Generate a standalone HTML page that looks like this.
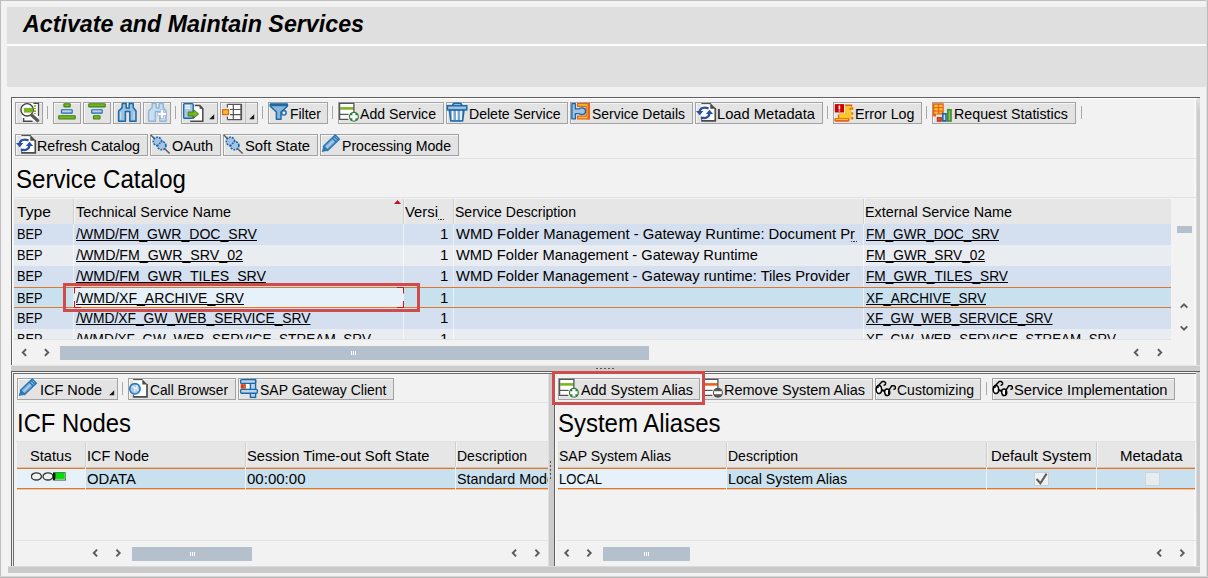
<!DOCTYPE html>
<html><head><meta charset="utf-8"><title>Activate and Maintain Services</title>
<style>
html,body{margin:0;padding:0}
body{width:1208px;height:578px;overflow:hidden;background:#f2f2f2;position:relative;font-family:"Liberation Sans",sans-serif;color:#000}
body div,body span.t,body svg{position:absolute}
span.t{white-space:nowrap;line-height:1;color:#000}
span.u{text-decoration:underline;text-decoration-thickness:1.1px;text-underline-offset:1.05px;text-decoration-skip-ink:none}
.btn{background:#e3e3e3;border:1px solid #a2a2a2;box-sizing:border-box;box-shadow:inset 1px 1px 0 #f6f6f6}
.sep{width:1px;background:#a8a8a8}

</style></head>
<body>
<div style="left:0px;top:0px;width:1208px;height:1px;background:#bfbfbf;"></div>
<div style="left:0px;top:0px;width:1px;height:578px;background:#bfbfbf;"></div>
<div style="left:1207px;top:0px;width:1px;height:578px;background:#bcbcbc;"></div>
<div style="left:1206px;top:0px;width:1px;height:578px;background:#dedede;"></div>
<div style="left:0px;top:577px;width:1208px;height:1px;background:#b6b6b6;"></div>
<div style="left:0px;top:576px;width:1208px;height:1px;background:#d6d6d6;"></div>
<div style="left:7px;top:7px;width:1199px;height:37px;background:#dfdfdf;"></div>
<div style="left:7px;top:44px;width:1199px;height:2px;background:#fdfdfd;"></div>
<div style="left:7px;top:46px;width:1199px;height:41px;background:#dfdfdf;"></div>
<span class="t " style="left:23.00px;top:12.53px;font-size:23px;font-weight:bold;font-style:italic;letter-spacing:0.000px;transform:scaleX(1.0105);transform-origin:0 0;">Activate and Maintain Services</span>
<div style="left:11px;top:97px;width:1189px;height:1px;background:#606060;"></div>
<div style="left:11px;top:97px;width:1px;height:269px;background:#606060;"></div>
<div style="left:12px;top:98px;width:1188px;height:1px;background:#ffffff;"></div>
<div style="left:12px;top:98px;width:1px;height:268px;background:#ffffff;"></div>
<div style="left:1197px;top:98px;width:3px;height:474px;background:linear-gradient(#e4e4e4,#cdcdcd 14px,#cacaca);"></div>
<div style="left:1196px;top:100px;width:1px;height:466px;background:#dadada;"></div>
<div style="left:1194px;top:98px;width:2px;height:468px;background:#f8f8f8;"></div>
<div style="left:11px;top:365px;width:1189px;height:1px;background:#e4e4e4;"></div>
<div style="left:11px;top:366px;width:1189px;height:5px;background:#cdcdcd;"></div>
<div class="btn" style="left:15px;top:102px;width:28px;height:22px"></div>
<div class="btn" style="left:53px;top:102px;width:28px;height:22px"></div>
<div class="btn" style="left:83px;top:102px;width:28px;height:22px"></div>
<div class="btn" style="left:113px;top:102px;width:28px;height:22px"></div>
<div class="btn" style="left:143px;top:102px;width:28px;height:22px"></div>
<div class="btn" style="left:181px;top:102px;width:37px;height:22px"></div>
<div class="btn" style="left:220px;top:102px;width:38px;height:22px"></div>
<div class="btn" style="left:268px;top:102px;width:60px;height:22px"></div>
<div class="btn" style="left:338px;top:102px;width:106px;height:22px"></div>
<div class="btn" style="left:446px;top:102px;width:122px;height:22px"></div>
<div class="btn" style="left:570px;top:102px;width:123px;height:22px"></div>
<div class="btn" style="left:695px;top:102px;width:128px;height:22px"></div>
<div class="btn" style="left:833px;top:102px;width:89px;height:22px"></div>
<div class="btn" style="left:932px;top:102px;width:144px;height:22px"></div>
<div class="sep" style="left:47px;top:106px;height:13px"></div>
<div class="sep" style="left:175px;top:106px;height:13px"></div>
<div class="sep" style="left:262px;top:106px;height:13px"></div>
<div class="sep" style="left:332px;top:106px;height:13px"></div>
<div class="sep" style="left:827px;top:106px;height:13px"></div>
<div class="sep" style="left:926px;top:106px;height:13px"></div>
<div class="sep" style="left:1081px;top:106px;height:13px"></div>
<div style="left:245px;top:103px;width:1px;height:20px;background:#c4c4c4;"></div>
<span class="t " style="left:289.88px;top:105.90px;font-size:15px;letter-spacing:0.000px;transform:scaleX(0.9297);transform-origin:0 0;">Filter</span>
<span class="t " style="left:360.38px;top:105.90px;font-size:15px;letter-spacing:0.000px;transform:scaleX(0.9397);transform-origin:0 0;">Add Service</span>
<span class="t " style="left:468.88px;top:105.90px;font-size:15px;letter-spacing:0.000px;transform:scaleX(0.9380);transform-origin:0 0;">Delete Service</span>
<span class="t " style="left:592.38px;top:105.90px;font-size:15px;letter-spacing:0.000px;transform:scaleX(0.9296);transform-origin:0 0;">Service Details</span>
<span class="t " style="left:717.38px;top:105.90px;font-size:15px;letter-spacing:0.000px;transform:scaleX(0.9792);transform-origin:0 0;">Load Metadata</span>
<span class="t " style="left:855.38px;top:105.90px;font-size:15px;letter-spacing:0.000px;transform:scaleX(0.9515);transform-origin:0 0;">Error Log</span>
<span class="t " style="left:954.38px;top:105.90px;font-size:15px;letter-spacing:0.000px;transform:scaleX(0.9495);transform-origin:0 0;">Request Statistics</span>
<svg style="left:15px;top:102px" width="28" height="22" viewBox="0 0 28 22"><rect x="7" y="1.2" width="16.5" height="18" fill="#fff"/>
<path d="M18.4 1.4H23.5V14" fill="none" stroke="#4a4a4a" stroke-width="1.3"/>
<path d="M8.6 16V19.3H17.6" fill="none" stroke="#4a4a4a" stroke-width="1.5"/>
<rect x="18.8" y="3.2" width="2.3" height="1.6" fill="#79b51c"/><rect x="18.8" y="6.1" width="2.3" height="1" fill="#79b51c"/>
<rect x="18.8" y="8.4" width="2.3" height="1.6" fill="#79b51c"/><rect x="18.8" y="11" width="2.3" height="1" fill="#79b51c"/>
<circle cx="12.1" cy="7.8" r="6.2" fill="#fff" stroke="#3e3e3e" stroke-width="1.4"/>
<rect x="8.9" y="5.9" width="8.8" height="4.7" fill="#79b51c"/>
<path d="M16.8 13.2L22.6 18.4" stroke="#5a5a5a" stroke-width="3.4" stroke-linecap="round"/></svg>
<svg style="left:53px;top:102px" width="28" height="22" viewBox="0 0 28 22"><rect x="10.9" y="1.7999999999999998" width="6.3" height="3.0999999999999996" rx="0.4" fill="#79b51c" stroke="#3f7f1f" stroke-width="1.1"/><rect x="8.5" y="7.699999999999999" width="10.700000000000001" height="3.3999999999999995" rx="0.4" fill="#b9d1ec" stroke="#1b6aa6" stroke-width="1.1"/><rect x="5.699999999999999" y="13.7" width="16.500000000000004" height="3.3000000000000016" rx="0.4" fill="#79b51c" stroke="#3f7f1f" stroke-width="1.1"/></svg>
<svg style="left:83px;top:102px" width="28" height="22" viewBox="0 0 28 22"><rect x="5.8" y="1.7999999999999998" width="16.400000000000002" height="3.0999999999999996" rx="0.4" fill="#79b51c" stroke="#3f7f1f" stroke-width="1.1"/><rect x="8.7" y="7.699999999999999" width="10.500000000000002" height="3.3999999999999995" rx="0.4" fill="#b9d1ec" stroke="#1b6aa6" stroke-width="1.1"/><rect x="10.5" y="13.7" width="6.500000000000001" height="3.3000000000000016" rx="0.4" fill="#79b51c" stroke="#3f7f1f" stroke-width="1.1"/></svg>
<svg style="left:113px;top:102px" width="28" height="22" viewBox="0 0 28 22"><path d="M9.2 1.5H13.2V5.9H16.2V1.5H20.2V5.6L23 9V19.2H16.8V9.4H12.4V19.2H5.6V9L9.2 5.6Z" fill="#9dbfe0" stroke="#1b6aa6" stroke-width="1.5" stroke-linejoin="round"/><path d="M7.6 10V17.6M21 10V17.6" stroke="#dbe8f5" stroke-width="1.2" opacity=".8"/></svg>
<svg style="left:143px;top:102px" width="28" height="22" viewBox="0 0 28 22"><path d="M9.2 1.5H13.2V5.9H16.2V1.5H20.2V5.6L23 9V19.2H16.8V9.4H12.4V19.2H5.6V9L9.2 5.6Z" fill="#c9ddee" stroke="#8db9db" stroke-width="1.5" stroke-linejoin="round"/><path d="M7.6 10V17.6M21 10V17.6" stroke="#dbe8f5" stroke-width="1.2" opacity=".8"/><path d="M19 7.4V16.6M14.4 12H23.6" stroke="#9aa6d6" stroke-width="3.8"/><path d="M19 7.9V16.1M14.9 12H23.1" stroke="#fff" stroke-width="2.4"/></svg>
<svg style="left:181px;top:102px" width="28" height="22" viewBox="0 0 28 22"><path d="M13.8 3.6H18.8L21.8 6.6V19.2H9" fill="#fff" stroke="none"/>
<path d="M13.8 3.6H18.8L21.8 6.6V19.2H9.2" fill="none" stroke="#4a4a4a" stroke-width="1.5"/><path d="M18.6 3.6V6.8H21.8Z" fill="#4a4a4a"/>
<rect x="2.6" y="1.6" width="9.6" height="14.6" rx="1" fill="#a9c6e6" stroke="#1b6aa6" stroke-width="1.4"/>
<path d="M4.2 3.8H9M4.2 6.2H9" stroke="#fff" stroke-width="1.2"/>
<path d="M7.2 10H12.4V7.4L17.6 12L12.4 16.4V14H7.2Z" fill="#79b51c" stroke="#3f7f1f" stroke-width="1"/></svg>
<svg style="left:209px;top:114px" width="6" height="6" viewBox="0 0 6 6"><path d="M5.2 0.2V5.2H0.2Z" fill="#1a1a1a"/></svg>
<svg style="left:220px;top:102px" width="28" height="22" viewBox="0 0 28 22"><rect x="7.4" y="2.4" width="14" height="15" fill="#fff"/>
<path d="M7.4 2.3H21.6M10 7.5H21.6M10 12.7H21.6M7.4 17.6H21.6M13.3 2.3V17.6M7.4 2.3V5.5M7.4 14.5V17.6" fill="none" stroke="#555" stroke-width="1.2"/>
<path d="M21.2 2V18" stroke="#555" stroke-width="1.8"/>
<rect x="2.7" y="7.7" width="5.8" height="4.8" fill="#f9c62b" stroke="#e8621a" stroke-width="1.3"/></svg>
<svg style="left:249px;top:114px" width="6" height="6" viewBox="0 0 6 6"><path d="M5.2 0.2V5.2H0.2Z" fill="#1a1a1a"/></svg>
<svg style="left:268px;top:102px" width="24" height="22" viewBox="0 0 24 22"><path d="M2.2 2.2H19.4V4.2L13 10V17.2H8.4V10L2.2 4.2Z" fill="#8fb4da" stroke="#1b6aa6" stroke-width="1.5" stroke-linejoin="round"/>
<rect x="2" y="1.4" width="17.6" height="2.8" fill="#1b6aa6"/>
<circle cx="15.9" cy="10.8" r="2.3" fill="#dbe7f3" stroke="#1b6aa6" stroke-width="1.4"/></svg>
<svg style="left:338px;top:102px" width="22" height="22" viewBox="0 0 22 22"><rect x="1.6" y="1.2" width="14.2" height="16.6" fill="#fff"/>
<rect x="2.2" y="5.1" width="13.6" height="2.6" fill="#79b51c"/>
<path d="M15.9 10V1.3H1.6V17.4H10.4" fill="none" stroke="#555" stroke-width="1.3"/>
<path d="M1.6 12.4H10.6" stroke="#555" stroke-width="1.2"/><circle cx="15.9" cy="14.7" r="5" fill="#2f7d3c"/><path d="M15.9 11V18.4M12.2 14.7H19.6" stroke="#fff" stroke-width="3"/></svg>
<svg style="left:446px;top:102px" width="22" height="22" viewBox="0 0 22 22"><path d="M6.6 3.4Q6.6 1.2 9 1.2H13.4Q15.8 1.2 15.8 3.4" fill="#9fc0e2" stroke="#1b6aa6" stroke-width="1.4"/>
<path d="M3.4 8L4.8 19H16.6L18 8Z" fill="#7aa6d2" stroke="#1b6aa6" stroke-width="1.6" stroke-linejoin="round"/>
<path d="M6.6 8.6V18M10.8 8.6V18M15 8.6V18" stroke="#fff" stroke-width="1.6"/>
<rect x="1.4" y="3.7" width="19.4" height="4.2" fill="#9fc0e2" stroke="#1b6aa6" stroke-width="1.5"/></svg>
<svg style="left:570px;top:102px" width="22" height="22" viewBox="0 0 22 22"><path d="M7.6 1.6H19.2V16.9H7.6V14.1H16.1V4.4H7.6Z" fill="#f9c62b" stroke="#e8621a" stroke-width="1.2"/>
<path d="M18.7 1V17.5" stroke="#e8621a" stroke-width="2.4"/>
<path d="M1.9 1.6H5.4V6.9H9.4C10.4 5.4 15.6 5.2 15.6 9.2C15.6 13.2 10.4 13 9.4 11.6H5.4V16.9H1.9Z" fill="#a3c1e2" stroke="#1b6aa6" stroke-width="1.4" stroke-linejoin="round"/></svg>
<svg style="left:695px;top:102px" width="22" height="22" viewBox="0 0 22 22"><path d="M6.4 1.3H15.6L20.6 6.3V19.2H6.4Z" fill="#fff"/>
<path d="M6.4 1.6H15.8" stroke="#4a4a4a" stroke-width="1.1"/>
<path d="M15.6 1.2L20.8 6.4H15.6Z" fill="#4a4a4a"/><path d="M15.6 1.2V6.4H20.8" fill="none" stroke="#4a4a4a" stroke-width=".6"/>
<path d="M20.3 6V18.8H6.6" fill="none" stroke="#4a4a4a" stroke-width="1.7"/>
<path d="M6.7 19.4V15" stroke="#4a4a4a" stroke-width="1"/>
<g fill="none" stroke="#2650a6" stroke-width="2.2">
<path d="M4.7 10C4.7 6 9 4.4 13.6 6.6"/><path d="M14.5 11C14.5 15.4 10 17.2 6 15.2"/></g>
<path d="M1 9H8.4L4.7 13.2Z" fill="#2650a6"/><path d="M10.8 12H18.2L14.5 7.8Z" fill="#2650a6"/></svg>
<svg style="left:833px;top:102px" width="24" height="22" viewBox="0 0 24 22"><path d="M6 3.2H17.6V5H20.2V8H18.4V10H20.2V13H18.4V15H20.2V17.6H6Z" fill="#f9c62b"/>
<path d="M11.6 3.2H18.4V4.8" fill="none" stroke="#e8621a" stroke-width="1.6"/>
<path d="M19.3 5.4V7.6M19.3 10.4V12.6M19.3 15V17.2" stroke="#e8621a" stroke-width="1.8"/>
<rect x="16.6" y="6" width="1.6" height="1.6" fill="#e8621a"/>
<path d="M5.6 12.4V16" stroke="#e8621a" stroke-width="1.2"/>
<rect x="1.4" y="16" width="15" height="3.8" rx="1" fill="#e8621a"/><path d="M3 17.4H15" stroke="#f9c62b" stroke-width="1.2"/>
<rect x="1.6" y="1.8" width="10.4" height="9.4" fill="#fff"/>
<rect x="1.8" y="2.1" width="9.3" height="8.4" fill="#cc0000"/>
<path d="M6.4 3.4V7.6M6.4 8.4V9.6" stroke="#fff" stroke-width="1.6"/></svg>
<svg style="left:932px;top:102px" width="22" height="22" viewBox="0 0 22 22"><path d="M0.8 1.2H11.8V12.4H4V14.6H0.8Z" fill="#e8621a"/>
<g fill="#f9c62b"><rect x="2.4" y="2.8" width="3.4" height="2.2"/><rect x="7.2" y="2.8" width="3.4" height="2.2"/>
<rect x="2.4" y="6.2" width="3.4" height="2.2"/><rect x="7.2" y="6.2" width="3.4" height="2.2"/>
<rect x="2.4" y="9.6" width="3.4" height="2"/><rect x="7.2" y="9.6" width="2.6" height="1.6"/></g>
<rect x="4.8" y="15" width="5" height="4.8" fill="#c2321a"/><rect x="6.2" y="16.2" width="2" height="2" fill="#e8621a"/>
<rect x="10" y="11" width="4.8" height="8.8" fill="#1b6aa6"/><rect x="11.6" y="12.6" width="1.6" height="5.4" fill="#c9dcef"/>
<rect x="15" y="7" width="4.8" height="12.8" fill="#3b8b3b"/><rect x="16.6" y="8.6" width="1.6" height="9.6" fill="#8cc63f"/></svg>
<div class="btn" style="left:15px;top:134px;width:133px;height:22px"></div>
<div class="btn" style="left:150px;top:134px;width:71px;height:22px"></div>
<div class="btn" style="left:223px;top:134px;width:95px;height:22px"></div>
<div class="btn" style="left:320px;top:134px;width:139px;height:22px"></div>
<span class="t " style="left:37.38px;top:137.80px;font-size:15px;letter-spacing:0.000px;transform:scaleX(0.9501);transform-origin:0 0;">Refresh Catalog</span>
<span class="t " style="left:172.38px;top:137.80px;font-size:15px;letter-spacing:0.000px;transform:scaleX(0.9640);transform-origin:0 0;">OAuth</span>
<span class="t " style="left:245.38px;top:137.80px;font-size:15px;letter-spacing:0.000px;transform:scaleX(0.9867);transform-origin:0 0;">Soft State</span>
<span class="t " style="left:342.38px;top:137.80px;font-size:15px;letter-spacing:0.000px;transform:scaleX(0.9404);transform-origin:0 0;">Processing Mode</span>
<svg style="left:15px;top:134px" width="22" height="22" viewBox="0 0 22 22"><path d="M6.4 1.3H15.6L20.6 6.3V19.2H6.4Z" fill="#fff"/>
<path d="M6.4 1.6H15.8" stroke="#4a4a4a" stroke-width="1.1"/>
<path d="M15.6 1.2L20.8 6.4H15.6Z" fill="#4a4a4a"/><path d="M15.6 1.2V6.4H20.8" fill="none" stroke="#4a4a4a" stroke-width=".6"/>
<path d="M20.3 6V18.8H6.6" fill="none" stroke="#4a4a4a" stroke-width="1.7"/>
<path d="M6.7 19.4V15" stroke="#4a4a4a" stroke-width="1"/>
<g fill="none" stroke="#2650a6" stroke-width="2.2">
<path d="M4.7 10C4.7 6 9 4.4 13.6 6.6"/><path d="M14.5 11C14.5 15.4 10 17.2 6 15.2"/></g>
<path d="M1 9H8.4L4.7 13.2Z" fill="#2650a6"/><path d="M10.8 12H18.2L14.5 7.8Z" fill="#2650a6"/></svg>
<svg style="left:150px;top:134px" width="22" height="22" viewBox="0 0 22 22"><path d="M0.8 1L19.6 19.5" stroke="#5a5a5a" stroke-width="1.5"/>
<circle cx="7.5" cy="7.4" r="4.1" fill="#a6c2e4" stroke="#1565a3" stroke-width="1.8" stroke-dasharray="1.8 1.1"/>
<circle cx="11.7" cy="11.6" r="4.1" fill="#a6c2e4" stroke="#1565a3" stroke-width="1.8" stroke-dasharray="1.8 1.1"/>
<circle cx="7.5" cy="7.4" r="3.2" fill="#a6c2e4"/><circle cx="11.7" cy="11.6" r="3.2" fill="#a6c2e4"/>
<path d="M7.2 11.9L12 7.1" stroke="#1565a3" stroke-width="1.4" stroke-dasharray="1.6 1.2"/></svg>
<svg style="left:223px;top:134px" width="22" height="22" viewBox="0 0 22 22"><path d="M0.8 1L19.6 19.5" stroke="#5a5a5a" stroke-width="1.5"/>
<circle cx="7.5" cy="7.4" r="4.1" fill="#a6c2e4" stroke="#1565a3" stroke-width="1.8" stroke-dasharray="1.8 1.1"/>
<circle cx="11.7" cy="11.6" r="4.1" fill="#a6c2e4" stroke="#1565a3" stroke-width="1.8" stroke-dasharray="1.8 1.1"/>
<circle cx="7.5" cy="7.4" r="3.2" fill="#a6c2e4"/><circle cx="11.7" cy="11.6" r="3.2" fill="#a6c2e4"/>
<path d="M7.2 11.9L12 7.1" stroke="#1565a3" stroke-width="1.4" stroke-dasharray="1.6 1.2"/></svg>
<svg style="left:320px;top:134px" width="22" height="22" viewBox="0 0 22 22"><g transform="translate(2 17.8) rotate(-44)"><path d="M-0.4 0L5 -3.2V3.2Z" fill="#2a79b3"/>
<rect x="5" y="-2.9" width="16.2" height="5.8" fill="#7fadd8" stroke="#2a79b3" stroke-width="1.5"/>
<path d="M6 0H20.4" stroke="#a9cae8" stroke-width="1.7"/>
<path d="M17 -2.9V2.9" stroke="#2a79b3" stroke-width="1.5"/><path d="M19.4 -2.9V2.9" stroke="#2a79b3" stroke-width="1.2"/></g></svg>
<div style="left:14px;top:158px;width:1182px;height:1px;background:#e2e2e2;"></div>
<span class="t " style="left:15.73px;top:166.84px;font-size:25px;letter-spacing:0.000px;transform:scaleX(0.9633);transform-origin:0 0;">Service Catalog</span>
<div style="left:14px;top:197px;width:1182px;height:1px;background:#e2e2e2;"></div>
<div style="left:14px;top:199px;width:1157px;height:25px;background:#e6e6e6;"></div>
<div style="left:14px;top:224px;width:1157px;height:21px;background:#d4dfef;"></div>
<div style="left:14px;top:245px;width:1157px;height:21px;background:#e9edf2;"></div>
<div style="left:14px;top:266px;width:1157px;height:21px;background:#d4dfef;"></div>
<div style="left:14px;top:287px;width:1157px;height:21px;background:#c9e1ef;"></div>
<div style="left:14px;top:308px;width:1157px;height:21px;background:#d4dfef;"></div>
<div style="left:14px;top:329px;width:1157px;height:11px;background:#e9edf2;"></div>
<div style="left:73px;top:199px;width:1px;height:25px;background:#cfcfcf;"></div>
<div style="left:74px;top:199px;width:1px;height:25px;background:#f4f4f4;"></div>
<div style="left:73px;top:224px;width:1px;height:116px;background:rgba(255,255,255,.55);"></div>
<div style="left:403px;top:199px;width:1px;height:25px;background:#cfcfcf;"></div>
<div style="left:404px;top:199px;width:1px;height:25px;background:#f4f4f4;"></div>
<div style="left:403px;top:224px;width:1px;height:116px;background:rgba(255,255,255,.55);"></div>
<div style="left:453px;top:199px;width:1px;height:25px;background:#cfcfcf;"></div>
<div style="left:454px;top:199px;width:1px;height:25px;background:#f4f4f4;"></div>
<div style="left:453px;top:224px;width:1px;height:116px;background:rgba(255,255,255,.55);"></div>
<div style="left:863px;top:199px;width:1px;height:25px;background:#cfcfcf;"></div>
<div style="left:864px;top:199px;width:1px;height:25px;background:#f4f4f4;"></div>
<div style="left:863px;top:224px;width:1px;height:116px;background:rgba(255,255,255,.55);"></div>
<div style="left:14px;top:287px;width:1157px;height:1px;background:#e0782a;"></div>
<div style="left:14px;top:307px;width:1157px;height:1px;background:#e0782a;"></div>
<div style="left:74px;top:288px;width:329px;height:19px;background:#e6f1f9;"></div>
<span class="t " style="left:16.68px;top:204.00px;font-size:15px;letter-spacing:0.000px;transform:scaleX(1.0451);transform-origin:0 0;">Type</span>
<span class="t " style="left:75.88px;top:204.00px;font-size:15px;letter-spacing:0.000px;transform:scaleX(0.9633);transform-origin:0 0;">Technical Service Name</span>
<span class="t " style="left:404.88px;top:204.00px;font-size:15px;letter-spacing:0.000px;transform:scaleX(0.9892);transform-origin:0 0;">Versi</span>
<span class="t " style="left:455.07px;top:204.00px;font-size:15px;letter-spacing:0.000px;transform:scaleX(0.9364);transform-origin:0 0;">Service Description</span>
<span class="t " style="left:865.38px;top:204.00px;font-size:15px;letter-spacing:0.000px;transform:scaleX(0.9582);transform-origin:0 0;">External Service Name</span>
<div style="left:14px;top:199px;width:1157px;height:141px;overflow:hidden">
<span class="t " style="left:3.07px;top:27.30px;font-size:15px;letter-spacing:0.000px;transform:scaleX(0.8496);transform-origin:0 0;">BEP</span>
<span class="t u" style="left:62.47px;top:27.30px;font-size:15px;letter-spacing:0.000px;transform:scaleX(0.9374);transform-origin:0 0;">/WMD/FM_GWR_DOC_SRV</span>
<span class="t " style="left:425.88px;top:27.30px;font-size:15px;">1</span>
<span class="t " style="left:442.48px;top:27.30px;font-size:15px;letter-spacing:0.000px;transform:scaleX(0.9869);transform-origin:0 0;">WMD Folder Management - Gateway Runtime: Document Pr</span>
<span class="t u" style="left:852.48px;top:27.30px;font-size:15px;letter-spacing:0.000px;transform:scaleX(0.9032);transform-origin:0 0;">FM_GWR_DOC_SRV</span>
<span class="t " style="left:3.07px;top:48.30px;font-size:15px;letter-spacing:0.000px;transform:scaleX(0.8496);transform-origin:0 0;">BEP</span>
<span class="t u" style="left:62.47px;top:48.30px;font-size:15px;letter-spacing:0.000px;transform:scaleX(0.9466);transform-origin:0 0;">/WMD/FM_GWR_SRV_02</span>
<span class="t " style="left:425.88px;top:48.30px;font-size:15px;">1</span>
<span class="t " style="left:442.48px;top:48.30px;font-size:15px;letter-spacing:0.000px;transform:scaleX(0.9791);transform-origin:0 0;">WMD Folder Management - Gateway Runtime</span>
<span class="t u" style="left:852.48px;top:48.30px;font-size:15px;letter-spacing:0.000px;transform:scaleX(0.9111);transform-origin:0 0;">FM_GWR_SRV_02</span>
<span class="t " style="left:3.07px;top:69.30px;font-size:15px;letter-spacing:0.000px;transform:scaleX(0.8496);transform-origin:0 0;">BEP</span>
<span class="t u" style="left:62.47px;top:69.30px;font-size:15px;letter-spacing:0.000px;transform:scaleX(0.9433);transform-origin:0 0;">/WMD/FM_GWR_TILES_SRV</span>
<span class="t " style="left:425.88px;top:69.30px;font-size:15px;">1</span>
<span class="t " style="left:442.48px;top:69.30px;font-size:15px;letter-spacing:0.000px;transform:scaleX(0.9806);transform-origin:0 0;">WMD Folder Management - Gateway runtime: Tiles Provider</span>
<span class="t u" style="left:852.48px;top:69.30px;font-size:15px;letter-spacing:0.000px;transform:scaleX(0.9125);transform-origin:0 0;">FM_GWR_TILES_SRV</span>
<span class="t " style="left:3.07px;top:91.10px;font-size:15px;letter-spacing:0.000px;transform:scaleX(0.8496);transform-origin:0 0;">BEP</span>
<span class="t u" style="left:62.47px;top:91.10px;font-size:15px;letter-spacing:0.000px;transform:scaleX(0.9389);transform-origin:0 0;">/WMD/XF_ARCHIVE_SRV</span>
<span class="t " style="left:425.88px;top:91.10px;font-size:15px;">1</span>
<span class="t u" style="left:852.48px;top:91.10px;font-size:15px;letter-spacing:0.000px;transform:scaleX(0.9015);transform-origin:0 0;">XF_ARCHIVE_SRV</span>
<span class="t " style="left:3.07px;top:111.30px;font-size:15px;letter-spacing:0.000px;transform:scaleX(0.8496);transform-origin:0 0;">BEP</span>
<span class="t u" style="left:62.47px;top:111.30px;font-size:15px;letter-spacing:0.000px;transform:scaleX(0.9214);transform-origin:0 0;">/WMD/XF_GW_WEB_SERVICE_SRV</span>
<span class="t " style="left:425.88px;top:111.30px;font-size:15px;">1</span>
<span class="t u" style="left:852.48px;top:111.30px;font-size:15px;letter-spacing:0.000px;transform:scaleX(0.8937);transform-origin:0 0;">XF_GW_WEB_SERVICE_SRV</span>
<span class="t " style="left:3.07px;top:132.30px;font-size:15px;letter-spacing:0.000px;transform:scaleX(0.8496);transform-origin:0 0;">BEP</span>
<span class="t u" style="left:62.47px;top:132.30px;font-size:15px;letter-spacing:0.000px;transform:scaleX(0.9067);transform-origin:0 0;">/WMD/XF_GW_WEB_SERVICE_STREAM_SRV</span>
<span class="t " style="left:425.88px;top:132.30px;font-size:15px;">1</span>
<span class="t u" style="left:852.48px;top:132.30px;font-size:15px;letter-spacing:0.000px;transform:scaleX(0.8944);transform-origin:0 0;">XF_GW_WEB_SERVICE_STREAM_SRV</span>
</div>
<div style="left:438.0px;top:219px;width:1.2px;height:1.2px;background:#333;"></div>
<div style="left:851.0px;top:241px;width:1.2px;height:1.2px;background:#333;"></div>
<div style="left:440.4px;top:219px;width:1.2px;height:1.2px;background:#333;"></div>
<div style="left:853.4px;top:241px;width:1.2px;height:1.2px;background:#333;"></div>
<div style="left:442.8px;top:219px;width:1.2px;height:1.2px;background:#333;"></div>
<div style="left:855.8px;top:241px;width:1.2px;height:1.2px;background:#333;"></div>
<svg style="left:393px;top:199px" width="9" height="6"><path d="M1 5 L4.5 1 L8 5Z" fill="#c8102e"/></svg>
<div style="left:14px;top:339px;width:1157px;height:1px;background:#e2e2e2;"></div>
<div style="left:60px;top:346px;width:589px;height:14px;background:#b4c0cc;"></div>
<div style="left:1177px;top:226px;width:15px;height:7px;background:#b4c0cc;"></div>
<div style="left:351px;top:351px;width:1px;height:4px;background:#ffffff;"></div>
<div style="left:353px;top:351px;width:1px;height:4px;background:#ffffff;"></div>
<div style="left:355px;top:351px;width:1px;height:4px;background:#ffffff;"></div>
<div style="left:596px;top:368px;width:2px;height:1px;background:#555;"></div>
<div style="left:600px;top:368px;width:2px;height:1px;background:#555;"></div>
<div style="left:604px;top:368px;width:2px;height:1px;background:#555;"></div>
<div style="left:608px;top:368px;width:2px;height:1px;background:#555;"></div>
<div style="left:612px;top:368px;width:2px;height:1px;background:#555;"></div>
<div style="left:11px;top:371px;width:541px;height:1px;background:#606060;"></div>
<div style="left:11px;top:371px;width:1px;height:195px;background:#606060;"></div>
<div style="left:13px;top:373px;width:539px;height:1px;background:#6c6c6c;"></div>
<div style="left:13px;top:373px;width:1px;height:193px;background:#6c6c6c;"></div>
<div style="left:12px;top:372px;width:540px;height:1px;background:#f6f6f6;"></div>
<div style="left:12px;top:372px;width:1px;height:194px;background:#f6f6f6;"></div>
<div style="left:548px;top:374px;width:6px;height:192px;background:#cbcbcb;"></div>
<div style="left:548px;top:374px;width:1px;height:192px;background:#e0e0e0;"></div>
<div style="left:552px;top:371px;width:648px;height:1px;background:#606060;"></div>
<div style="left:552px;top:372px;width:644px;height:1px;background:#f6f6f6;"></div>
<div style="left:552px;top:373px;width:644px;height:1px;background:#6c6c6c;"></div>
<div style="left:554px;top:374px;width:1px;height:192px;background:#606060;"></div>
<div style="left:555px;top:374px;width:1px;height:192px;background:#fafafa;"></div>
<div style="left:8px;top:566px;width:1192px;height:7px;background:#cacaca;"></div>
<div style="left:8px;top:566px;width:1192px;height:1px;background:#dadada;"></div>
<div style="left:550px;top:461px;width:1px;height:2px;background:#555;"></div>
<div style="left:550px;top:465px;width:1px;height:2px;background:#555;"></div>
<div style="left:550px;top:469px;width:1px;height:2px;background:#555;"></div>
<div style="left:550px;top:473px;width:1px;height:2px;background:#555;"></div>
<div style="left:550px;top:477px;width:1px;height:2px;background:#555;"></div>
<div class="btn" style="left:17px;top:378px;width:101px;height:22px"></div>
<div class="btn" style="left:128px;top:378px;width:108px;height:22px"></div>
<div class="btn" style="left:238px;top:378px;width:156px;height:22px"></div>
<div class="sep" style="left:122px;top:382px;height:13px"></div>
<span class="t " style="left:40.38px;top:382.30px;font-size:15px;letter-spacing:0.000px;transform:scaleX(0.9657);transform-origin:0 0;">ICF Node</span>
<span class="t " style="left:150.38px;top:382.30px;font-size:15px;letter-spacing:0.000px;transform:scaleX(0.9173);transform-origin:0 0;">Call Browser</span>
<span class="t " style="left:260.38px;top:382.30px;font-size:15px;letter-spacing:0.000px;transform:scaleX(0.9327);transform-origin:0 0;">SAP Gateway Client</span>
<svg style="left:109px;top:390px" width="6" height="6" viewBox="0 0 6 6"><path d="M5.2 0.2V5.2H0.2Z" fill="#1a1a1a"/></svg>
<svg style="left:17px;top:378px" width="22" height="22" viewBox="0 0 22 22"><g transform="translate(2 17.8) rotate(-44)"><path d="M-0.4 0L5 -3.2V3.2Z" fill="#2a79b3"/>
<rect x="5" y="-2.9" width="16.2" height="5.8" fill="#7fadd8" stroke="#2a79b3" stroke-width="1.5"/>
<path d="M6 0H20.4" stroke="#a9cae8" stroke-width="1.7"/>
<path d="M17 -2.9V2.9" stroke="#2a79b3" stroke-width="1.5"/><path d="M19.4 -2.9V2.9" stroke="#2a79b3" stroke-width="1.2"/></g></svg>
<svg style="left:128px;top:378px" width="22" height="22" viewBox="0 0 22 22"><g transform="translate(-1.3 0)"><path d="M6.4 1.3H15.6L20.6 6.3V19.2H6.4Z" fill="#fff"/>
<path d="M6.4 1.6H15.8" stroke="#4a4a4a" stroke-width="1.1"/>
<path d="M15.6 1.2L20.8 6.4H15.6Z" fill="#4a4a4a"/>
<path d="M20.3 6V18.8H6.6" fill="none" stroke="#4a4a4a" stroke-width="1.7"/>
<path d="M6.7 19.4V16.4" stroke="#4a4a4a" stroke-width="1"/></g>
<circle cx="6.9" cy="10.8" r="5.2" fill="#a9c9e2" stroke="#2b7ab8" stroke-width="1.6"/>
<path d="M4.4 8.2L6.8 9.8L6.6 13.6M9.4 7.4L8.2 10L9.8 12.4" fill="none" stroke="#e8f1f8" stroke-width="1.5"/></svg>
<svg style="left:238px;top:378px" width="22" height="22" viewBox="0 0 22 22"><rect x="8" y="5.4" width="4.6" height="5" fill="#fff"/>
<rect x="12.4" y="1.6" width="5.2" height="17.8" fill="#bcd3ea" stroke="#1b6aa6" stroke-width="1.4"/>
<rect x="2.6" y="1.6" width="15" height="3.8" rx="1.2" fill="#bcd3ea" stroke="#1b6aa6" stroke-width="1.4"/>
<rect x="2.6" y="11.4" width="16.8" height="3.8" rx="1.2" fill="#bcd3ea" stroke="#1b6aa6" stroke-width="1.4"/>
<rect x="2.8" y="6.2" width="5" height="4.4" fill="#d63a18"/><rect x="5.4" y="7" width="2" height="2.8" fill="#e8621a"/></svg>
<div style="left:16px;top:402px;width:532px;height:1px;background:#e2e2e2;"></div>
<span class="t " style="left:16.82px;top:410.84px;font-size:25px;letter-spacing:0.000px;transform:scaleX(0.9541);transform-origin:0 0;">ICF Nodes</span>
<div style="left:16px;top:441px;width:532px;height:1px;background:#e2e2e2;"></div>
<div style="left:17px;top:442px;width:531px;height:26px;background:#e6e6e6;"></div>
<div style="left:85px;top:442px;width:1px;height:25px;background:#cfcfcf;"></div>
<div style="left:86px;top:442px;width:1px;height:25px;background:#f4f4f4;"></div>
<div style="left:245px;top:442px;width:1px;height:25px;background:#cfcfcf;"></div>
<div style="left:246px;top:442px;width:1px;height:25px;background:#f4f4f4;"></div>
<div style="left:455px;top:442px;width:1px;height:25px;background:#cfcfcf;"></div>
<div style="left:456px;top:442px;width:1px;height:25px;background:#f4f4f4;"></div>
<div style="left:17px;top:469px;width:531px;height:19px;background:#c9e1ef;"></div>
<div style="left:17px;top:469px;width:68px;height:19px;background:#e6f1f9;"></div>
<div style="left:85px;top:467px;width:1px;height:23px;background:#eef2f5;"></div>
<div style="left:245px;top:467px;width:1px;height:23px;background:#eef2f5;"></div>
<div style="left:455px;top:467px;width:1px;height:23px;background:#eef2f5;"></div>
<div style="left:17px;top:468px;width:68px;height:1px;background:#e0782a;"></div>
<div style="left:17px;top:467px;width:68px;height:1px;background:#e0782a;opacity:.35"></div>
<div style="left:17px;top:488px;width:68px;height:1px;background:#e0782a;"></div>
<div style="left:17px;top:489px;width:68px;height:1px;background:#e0782a;opacity:.35"></div>
<div style="left:86px;top:468px;width:159px;height:1px;background:#e0782a;"></div>
<div style="left:86px;top:467px;width:159px;height:1px;background:#e0782a;opacity:.35"></div>
<div style="left:86px;top:488px;width:159px;height:1px;background:#e0782a;"></div>
<div style="left:86px;top:489px;width:159px;height:1px;background:#e0782a;opacity:.35"></div>
<div style="left:246px;top:468px;width:209px;height:1px;background:#e0782a;"></div>
<div style="left:246px;top:467px;width:209px;height:1px;background:#e0782a;opacity:.35"></div>
<div style="left:246px;top:488px;width:209px;height:1px;background:#e0782a;"></div>
<div style="left:246px;top:489px;width:209px;height:1px;background:#e0782a;opacity:.35"></div>
<div style="left:456px;top:468px;width:92px;height:1px;background:#e0782a;"></div>
<div style="left:456px;top:467px;width:92px;height:1px;background:#e0782a;opacity:.35"></div>
<div style="left:456px;top:488px;width:92px;height:1px;background:#e0782a;"></div>
<div style="left:456px;top:489px;width:92px;height:1px;background:#e0782a;opacity:.35"></div>
<svg style="left:31px;top:471.5px" width="36" height="9" viewBox="0 0 36 9"><ellipse cx="5.4" cy="4.4" rx="5" ry="3.6" fill="#f0f0f0" stroke="#333" stroke-width="1.3"/>
<ellipse cx="17" cy="4.4" rx="5" ry="3.6" fill="#f0f0f0" stroke="#333" stroke-width="1.3"/>
<rect x="22" y="0.4" width="13" height="8" fill="#111"/><rect x="24.4" y="0.8" width="9.6" height="6.4" fill="#00e000"/><path d="M34.2 .4V7.4H24" fill="none" stroke="#d8e8d0" stroke-width="1" opacity=".8"/></svg>
<span class="t " style="left:29.88px;top:447.80px;font-size:15px;letter-spacing:0.000px;transform:scaleX(0.9758);transform-origin:0 0;">Status</span>
<span class="t " style="left:87.08px;top:447.80px;font-size:15px;letter-spacing:0.000px;transform:scaleX(0.9657);transform-origin:0 0;">ICF Node</span>
<span class="t " style="left:246.88px;top:447.80px;font-size:15px;letter-spacing:0.000px;transform:scaleX(0.9815);transform-origin:0 0;">Session Time-out Soft State</span>
<span class="t " style="left:457.18px;top:447.80px;font-size:15px;letter-spacing:0.000px;transform:scaleX(0.9329);transform-origin:0 0;">Description</span>
<span class="t " style="left:87.38px;top:470.60px;font-size:15px;letter-spacing:0.000px;transform:scaleX(0.9908);transform-origin:0 0;">ODATA</span>
<span class="t " style="left:246.88px;top:470.60px;font-size:15px;letter-spacing:0.000px;transform:scaleX(1.0019);transform-origin:0 0;">00:00:00</span>
<div style="left:456px;top:469px;width:92px;height:19px;overflow:hidden">
<span class="t " style="left:1.17px;top:1.60px;font-size:15px;letter-spacing:0.000px;transform:scaleX(0.9554);transform-origin:0 0;">Standard Mode</span>
</div>
<div style="left:16px;top:540px;width:532px;height:1px;background:#e2e2e2;"></div>
<div style="left:132px;top:547px;width:120px;height:14px;background:#b4c0cc;"></div>
<div style="left:190px;top:552px;width:1px;height:4px;background:#ffffff;"></div>
<div style="left:192px;top:552px;width:1px;height:4px;background:#ffffff;"></div>
<div style="left:194px;top:552px;width:1px;height:4px;background:#ffffff;"></div>
<div class="btn" style="left:558px;top:378px;width:142px;height:22px"></div>
<div class="btn" style="left:703px;top:378px;width:170px;height:22px"></div>
<div class="btn" style="left:875px;top:378px;width:106px;height:22px"></div>
<div class="btn" style="left:992px;top:378px;width:183px;height:22px"></div>
<div class="sep" style="left:986px;top:382px;height:13px"></div>
<span class="t " style="left:580.58px;top:382.30px;font-size:15px;letter-spacing:0.000px;transform:scaleX(0.9596);transform-origin:0 0;">Add System Alias</span>
<span class="t " style="left:724.17px;top:382.30px;font-size:15px;letter-spacing:0.000px;transform:scaleX(0.9665);transform-origin:0 0;">Remove System Alias</span>
<span class="t " style="left:897.27px;top:382.30px;font-size:15px;letter-spacing:0.000px;transform:scaleX(0.9330);transform-origin:0 0;">Customizing</span>
<span class="t " style="left:1014.17px;top:382.30px;font-size:15px;letter-spacing:0.000px;transform:scaleX(0.9793);transform-origin:0 0;">Service Implementation</span>
<svg style="left:558px;top:378px" width="22" height="22" viewBox="0 0 22 22"><rect x="1.6" y="1.2" width="14.2" height="16.6" fill="#fff"/>
<rect x="2.2" y="5.1" width="13.6" height="2.6" fill="#79b51c"/>
<path d="M15.9 10V1.3H1.6V17.4H10.4" fill="none" stroke="#555" stroke-width="1.3"/>
<path d="M1.6 12.4H10.6" stroke="#555" stroke-width="1.2"/><circle cx="15.9" cy="14.7" r="5" fill="#2f7d3c"/><path d="M15.9 11V18.4M12.2 14.7H19.6" stroke="#fff" stroke-width="3"/></svg>
<svg style="left:702px;top:378px" width="22" height="22" viewBox="0 0 22 22"><rect x="1.6" y="1.2" width="14.2" height="16.6" fill="#fff"/>
<rect x="2.2" y="5.1" width="13.6" height="2.6" fill="#e8621a"/>
<path d="M15.9 10V1.3H1.6V17.4H10.4" fill="none" stroke="#555" stroke-width="1.3"/>
<path d="M1.6 12.4H10.6" stroke="#555" stroke-width="1.2"/><circle cx="15.9" cy="14.7" r="5" fill="#555"/><rect x="12" y="13.2" width="7.8" height="3" fill="#fff"/></svg>
<svg style="left:875px;top:378px" width="22" height="22" viewBox="0 0 22 22"><g fill="none" stroke="#000" stroke-width="1.5" stroke-linejoin="round">
<ellipse cx="3.9" cy="11.5" rx="2.7" ry="4" fill="#fff"/>
<ellipse cx="12.2" cy="14.3" rx="2.5" ry="3.3" fill="#fff" transform="rotate(-8 12.2 14.3)"/>
<path d="M6.6 12L9.8 13.2" stroke-width="1.9"/>
<path d="M3.2 7.8L7.2 3.6H9.4Q11 4.4 10.6 6Q10 7.4 8.6 7.2"/>
<path d="M14.2 11.8L16.8 7.7H19.2Q20.8 8.6 20.4 10.2Q19.8 11.5 18.4 11.3"/>
<path d="M2 8.4L3.6 9.6M14 12.4V16.6" stroke-width="2"/></g></svg>
<svg style="left:992px;top:378px" width="22" height="22" viewBox="0 0 22 22"><g fill="none" stroke="#000" stroke-width="1.5" stroke-linejoin="round">
<ellipse cx="3.9" cy="11.5" rx="2.7" ry="4" fill="#fff"/>
<ellipse cx="12.2" cy="14.3" rx="2.5" ry="3.3" fill="#fff" transform="rotate(-8 12.2 14.3)"/>
<path d="M6.6 12L9.8 13.2" stroke-width="1.9"/>
<path d="M3.2 7.8L7.2 3.6H9.4Q11 4.4 10.6 6Q10 7.4 8.6 7.2"/>
<path d="M14.2 11.8L16.8 7.7H19.2Q20.8 8.6 20.4 10.2Q19.8 11.5 18.4 11.3"/>
<path d="M2 8.4L3.6 9.6M14 12.4V16.6" stroke-width="2"/></g></svg>
<div style="left:558px;top:402px;width:638px;height:1px;background:#e2e2e2;"></div>
<span class="t " style="left:557.62px;top:410.84px;font-size:25px;letter-spacing:0.000px;transform:scaleX(0.9586);transform-origin:0 0;">System Aliases</span>
<div style="left:558px;top:441px;width:638px;height:1px;background:#e2e2e2;"></div>
<div style="left:558px;top:442px;width:637px;height:26px;background:#e6e6e6;"></div>
<div style="left:726px;top:442px;width:1px;height:25px;background:#cfcfcf;"></div>
<div style="left:727px;top:442px;width:1px;height:25px;background:#f4f4f4;"></div>
<div style="left:986px;top:442px;width:1px;height:25px;background:#cfcfcf;"></div>
<div style="left:987px;top:442px;width:1px;height:25px;background:#f4f4f4;"></div>
<div style="left:1096px;top:442px;width:1px;height:25px;background:#cfcfcf;"></div>
<div style="left:1097px;top:442px;width:1px;height:25px;background:#f4f4f4;"></div>
<div style="left:558px;top:469px;width:637px;height:19px;background:#c9e1ef;"></div>
<div style="left:558px;top:469px;width:168px;height:19px;background:#e6f1f9;"></div>
<div style="left:726px;top:467px;width:1px;height:23px;background:#eef2f5;"></div>
<div style="left:986px;top:467px;width:1px;height:23px;background:#eef2f5;"></div>
<div style="left:1096px;top:467px;width:1px;height:23px;background:#eef2f5;"></div>
<div style="left:558px;top:468px;width:168px;height:1px;background:#e0782a;"></div>
<div style="left:558px;top:467px;width:168px;height:1px;background:#e0782a;opacity:.35"></div>
<div style="left:558px;top:488px;width:168px;height:1px;background:#e0782a;"></div>
<div style="left:558px;top:489px;width:168px;height:1px;background:#e0782a;opacity:.35"></div>
<div style="left:727px;top:468px;width:259px;height:1px;background:#e0782a;"></div>
<div style="left:727px;top:467px;width:259px;height:1px;background:#e0782a;opacity:.35"></div>
<div style="left:727px;top:488px;width:259px;height:1px;background:#e0782a;"></div>
<div style="left:727px;top:489px;width:259px;height:1px;background:#e0782a;opacity:.35"></div>
<div style="left:987px;top:468px;width:109px;height:1px;background:#e0782a;"></div>
<div style="left:987px;top:467px;width:109px;height:1px;background:#e0782a;opacity:.35"></div>
<div style="left:987px;top:488px;width:109px;height:1px;background:#e0782a;"></div>
<div style="left:987px;top:489px;width:109px;height:1px;background:#e0782a;opacity:.35"></div>
<div style="left:1097px;top:468px;width:98px;height:1px;background:#e0782a;"></div>
<div style="left:1097px;top:467px;width:98px;height:1px;background:#e0782a;opacity:.35"></div>
<div style="left:1097px;top:488px;width:98px;height:1px;background:#e0782a;"></div>
<div style="left:1097px;top:489px;width:98px;height:1px;background:#e0782a;opacity:.35"></div>
<span class="t " style="left:559.27px;top:447.80px;font-size:15px;letter-spacing:0.000px;transform:scaleX(0.9350);transform-origin:0 0;">SAP System Alias</span>
<span class="t " style="left:728.27px;top:447.80px;font-size:15px;letter-spacing:0.000px;transform:scaleX(0.9329);transform-origin:0 0;">Description</span>
<span class="t " style="left:991.08px;top:447.80px;font-size:15px;letter-spacing:0.000px;transform:scaleX(0.9861);transform-origin:0 0;">Default System</span>
<span class="t " style="left:1119.88px;top:447.80px;font-size:15px;letter-spacing:0.000px;transform:scaleX(1.0008);transform-origin:0 0;">Metadata</span>
<span class="t " style="left:559.27px;top:470.60px;font-size:15px;letter-spacing:0.000px;transform:scaleX(0.8739);transform-origin:0 0;">LOCAL</span>
<span class="t " style="left:728.27px;top:470.60px;font-size:15px;letter-spacing:0.000px;transform:scaleX(0.9453);transform-origin:0 0;">Local System Alias</span>
<div style="left:1034px;top:472px;width:15px;height:14px;background:#eef2f5;box-sizing:border-box;border:1px solid #cfcfcf"></div>
<svg style="left:1034px;top:472px" width="15" height="14"><path d="M2.6 7 L6.4 11.2 L12.6 1.6" fill="none" stroke="#5e5e5e" stroke-width="2.1"/></svg>
<div style="left:1145px;top:472px;width:15px;height:14px;background:#e6edf2;box-sizing:border-box;border:1px solid #d4d4d4"></div>
<div style="left:558px;top:540px;width:638px;height:1px;background:#e2e2e2;"></div>
<div style="left:603px;top:547px;width:87px;height:14px;background:#b4c0cc;"></div>
<div style="left:644px;top:552px;width:1px;height:4px;background:#ffffff;"></div>
<div style="left:646px;top:552px;width:1px;height:4px;background:#ffffff;"></div>
<div style="left:648px;top:552px;width:1px;height:4px;background:#ffffff;"></div>
<div style="left:63px;top:283px;width:357px;height:29px;box-sizing:border-box;border:3px solid #d04c4c"></div>
<div style="left:552px;top:371px;width:153px;height:34px;box-sizing:border-box;border:3px solid #d04c4c"></div>
<svg style="left:74px;top:287px" width="330" height="21"><path d="M0.5 6.5V0.5H7 M0.5 14V20.5H7 M329.5 6.5V0.5H323 M329.5 14V20.5H323" stroke="#e01010" fill="none"/></svg>
<svg style="left:0;top:0;pointer-events:none" width="1208" height="578"><path d="M26.1 349.2 L22.8 352.5 L26.1 355.8 M44.9 349.2 L48.2 352.5 L44.9 355.8 M1138.1 349.2 L1134.8 352.5 L1138.1 355.8 M1157.9 349.2 L1161.2 352.5 L1157.9 355.8 M1180.7 307.6 L1184 304.3 L1187.3 307.6 M1180.7 326.4 L1184 329.7 L1187.3 326.4 M97.1 549.7 L93.8 553 L97.1 556.3 M116.4 549.7 L119.7 553 L116.4 556.3 M516.1 549.7 L512.8 553 L516.1 556.3 M535.4 549.7 L538.7 553 L535.4 556.3 M568.6 549.7 L565.3 553 L568.6 556.3 M587.4 549.7 L590.7 553 L587.4 556.3 M1161.1 549.7 L1157.8 553 L1161.1 556.3 M1180.4 549.7 L1183.7 553 L1180.4 556.3" fill="none" stroke="#5a5a5a" stroke-width="1.9"/></svg>
</body></html>
